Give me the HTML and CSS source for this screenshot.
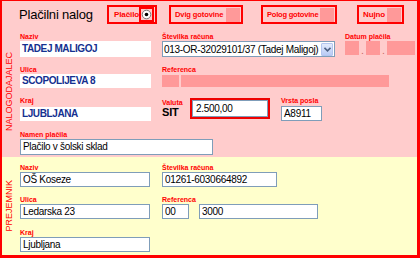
FILE: index.html
```html
<!DOCTYPE html>
<html>
<head>
<meta charset="utf-8">
<link rel="stylesheet" href="styles.css">
</head>
<body>
<div class="frame">
  <div class="header">
    <h1 class="title">Plačilni nalog</h1>
    <div class="opt o-placilo"><span>Plačilo</span><span class="radio"><svg width="11" height="11" viewBox="0 0 11 11"><circle cx="5.5" cy="5.5" r="4.3" fill="#fff" stroke="#777" stroke-width="1"/><circle cx="5.5" cy="5.5" r="1.8" fill="#000"/></svg></span></div>
    <div class="opt o-dvig"><span>Dvig gotovine</span><span class="sq"></span></div>
    <div class="opt o-polog"><span>Polog gotovine</span><span class="sq"></span></div>
    <div class="opt o-nujno"><span>Nujno</span><span class="sq"></span></div>
  </div>

  <div class="section payer">
    <div class="side"><span>NALOGODAJALEC</span></div>
    <div class="body">
      <div class="row r1">
        <div class="field c1"><label>Naziv</label><div class="plain h16">TADEJ MALIGOJ</div></div>
        <div class="field c-sel"><label>Številka računa</label>
          <div class="select"><span>013-OR-32029101/37 (Tadej Maligoj)</span><span class="arrow"><svg width="7" height="5" viewBox="0 0 7 5"><path d="M0.5 0.8 L3.5 3.8 L6.5 0.8" fill="none" stroke="#4d6185" stroke-width="1.6"/></svg></span></div>
        </div>
        <div class="field c-date"><label>Datum plačila</label>
          <div class="date"><span class="pb d1"></span><span class="dot">.</span><span class="pb d1"></span><span class="dot">.</span><span class="pb d2"></span></div>
        </div>
      </div>
      <div class="row r2">
        <div class="field c1"><label>Ulica</label><div class="plain h14">SCOPOLIJEVA 8</div></div>
        <div class="field c-ref"><label>Referenca</label>
          <div class="refbar"><span class="pb rb1"></span><span class="pb rb2"></span></div>
        </div>
      </div>
      <div class="row r3">
        <div class="field c1 kraj"><label>Kraj</label><div class="plain h14">LJUBLJANA</div></div>
        <div class="field c-val"><label>Valuta</label><div class="sit">SIT</div></div>
        <div class="amount"><div class="inp amt">2.500,00</div></div>
        <div class="field c-vp"><label>Vrsta posla</label><div class="inp vp">A8911</div></div>
      </div>
      <div class="row r4">
        <div class="field"><label>Namen plačila</label><div class="inp namen">Plačilo v šolski sklad</div></div>
      </div>
    </div>
  </div>

  <div class="section payee">
    <div class="side"><span>PREJEMNIK</span></div>
    <div class="body">
      <div class="row y1">
        <div class="field c1y"><label>Naziv</label><div class="inp w130">OŠ Koseze</div></div>
        <div class="field"><label>Številka računa</label><div class="inp w115">01261-6030664892</div></div>
      </div>
      <div class="row y2">
        <div class="field c1y"><label>Ulica</label><div class="inp w130">Ledarska 23</div></div>
        <div class="field"><label>Referenca</label>
          <div class="refpair"><div class="inp w27">00</div><div class="inp w119">3000</div></div>
        </div>
      </div>
      <div class="row y3">
        <div class="field c1y"><label>Kraj</label><div class="inp w130">Ljubljana</div></div>
      </div>
    </div>
  </div>
</div>
</body>
</html>
```
FILE: styles.css
```css
* { box-sizing: border-box; margin: 0; padding: 0; }
body { margin: 0; width: 420px; height: 258px; background: #fff; font-family: "Liberation Sans", Arial, sans-serif; }

.frame {
  width: 420px; height: 258px;
  border: 2px solid #ff0000;
  border-top-width: 1px; border-right-width: 3px; border-bottom-width: 3px;
  background: #ffcccc;
  display: flex; flex-direction: column;
}

.header { height: 25px; display: flex; align-items: flex-start; padding-left: 17px; }
.title { font-size: 13px; font-weight: normal; color: #000; width: 88px; margin-top: 6px; line-height: 15px; letter-spacing: -0.2px; white-space: nowrap; }
.opt {
  margin-top: 4px; height: 19px;
  border: 2px solid #ff0000;
  display: flex; align-items: center; justify-content: space-between;
  padding: 0 1px 0 4px;
  font-size: 7.5px; font-weight: bold; color: #ff0000; letter-spacing: -0.1px;
  white-space: nowrap;
}
.opt span:first-child { flex: none; }
.o-placilo { width: 50px; padding-left: 5px; font-size: 8px; }
.o-dvig { width: 74px; margin-left: 12px; }
.o-polog { width: 76px; margin-left: 18px; letter-spacing: -0.2px; }
.o-nujno { width: 47px; margin-left: 20px; font-size: 8px; }
.sq { width: 14px; height: 14px; background: #ff9999; flex: none; }
.radio { width: 15px; height: 15px; border: 2px solid #ff0000; background: #ffcccc; display: flex; align-items: center; justify-content: center; flex: none; }
.radio svg { display: block; }

.section { display: flex; }
.payer { height: 131px; background: #ffcccc; }
.payee { flex: 1; background: #ffffcc; }
.side { width: 14px; display: flex; align-items: center; justify-content: center; }
.side span { writing-mode: vertical-rl; transform: rotate(180deg); font-size: 9px; color: #ff0000; line-height: 10px; }
.body { flex: 1; padding-left: 4px; }

.row { display: flex; align-items: flex-start; }
.field label { display: block; height: 8px; line-height: 8px; font-size: 7px; font-weight: bold; color: #ff0000; white-space: nowrap; }

.r1 { padding-top: 7px; }
.r2 { margin-top: 9px; }
.r3 { margin-top: 9px; }
.r4 { margin-top: 10px; }

.c1 { width: 131px; margin-right: 11px; }
.plain {
  background: #fff; font-size: 10px; font-weight: bold; color: #14308f;
  padding-left: 2px; letter-spacing: -0.4px; white-space: nowrap;
}
.h16 { height: 16px; line-height: 16px; }
.h14 { height: 14px; line-height: 14px; }

.c-sel { width: 173px; }
.select {
  height: 16px; border: 1px solid #7f9db9; background: #fff;
  display: flex; align-items: center; justify-content: space-between;
  font-size: 10px; letter-spacing: -0.3px; color: #000; padding-left: 1px; white-space: nowrap; overflow: hidden;
}
.arrow {
  width: 12px; height: 13px; margin-right: 1px;
  background: linear-gradient(#e3ebfd, #b9cbf5);
  border: 1px solid #b3c5ef; border-radius: 1px;
  display: flex; align-items: center; justify-content: center; flex: none;
}
.arrow svg { display: block; }

.c-date { margin-left: 10px; }
.date { display: flex; align-items: flex-end; height: 14px; }
.pb { display: block; background: #ff9999; }
.d1 { width: 14px; height: 14px; }
.d2 { width: 28px; height: 14px; }
.dot { width: 7px; text-align: center; font-size: 7px; line-height: 6px; color: #cc6666; font-weight: bold; }

.c-ref { width: 227px; }
.refbar { display: flex; gap: 2px; margin-top: 1px; height: 12px; }
.rb1 { width: 17px; height: 12px; }
.rb2 { flex: 1; height: 12px; }

.kraj label { margin-bottom: 2px; }
.c-val { width: 28px; margin-top: 2px; }
.sit { font-size: 11px; font-weight: bold; line-height: 11px; color: #000; letter-spacing: -0.2px; }
.amount { margin-top: 1px; width: 80px; height: 21px; border: 2px solid #ee0000; }
.inp {
  height: 15px; line-height: 13px; border: 1px solid #7f9db9; background: #fff;
  font-size: 10px; color: #000; padding-left: 2px; letter-spacing: -0.3px; white-space: nowrap;
}
.amt { height: 17px; line-height: 15px; padding-left: 3px; }
.c-vp { margin-left: 11px; }
.vp { width: 41px; margin-top: 1px; }
.namen { width: 193px; height: 16px; line-height: 14px; }

.y1 { padding-top: 7px; }
.y2 { margin-top: 9px; }
.y3 { margin-top: 10px; }
.c1y { margin-right: 12px; }
.w130 { width: 130px; }
.w115 { width: 115px; }
.w27 { width: 27px; }
.w119 { width: 119px; }
.refpair { display: flex; gap: 10px; }
```
